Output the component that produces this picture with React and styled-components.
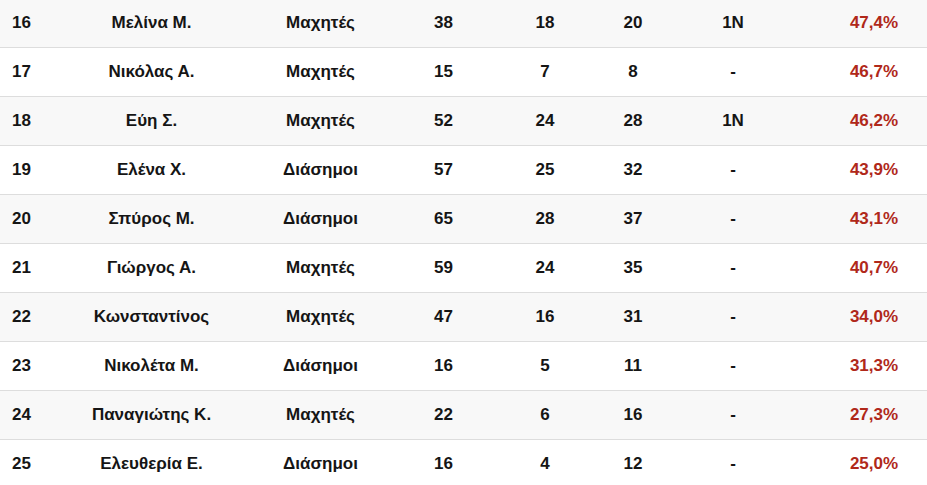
import styled, { createGlobalStyle } from "styled-components";

const GlobalStyle = createGlobalStyle`
  html, body {
    margin: 0;
    padding: 0;
    background: #ffffff;
  }
  body {
    font-family: "Liberation Sans", Arial, sans-serif;
    overflow: hidden;
  }
`;

const players = [
  ["16", "Μελίνα Μ.", "Μαχητές", 38, 18, 20, "1N", "47,4%"],
  ["17", "Νικόλας Α.", "Μαχητές", 15, 7, 8, "-", "46,7%"],
  ["18", "Εύη Σ.", "Μαχητές", 52, 24, 28, "1N", "46,2%"],
  ["19", "Ελένα Χ.", "Διάσημοι", 57, 25, 32, "-", "43,9%"],
  ["20", "Σπύρος Μ.", "Διάσημοι", 65, 28, 37, "-", "43,1%"],
  ["21", "Γιώργος Α.", "Μαχητές", 59, 24, 35, "-", "40,7%"],
  ["22", "Κωνσταντίνος", "Μαχητές", 47, 16, 31, "-", "34,0%"],
  ["23", "Νικολέτα Μ.", "Διάσημοι", 16, 5, 11, "-", "31,3%"],
  ["24", "Παναγιώτης Κ.", "Μαχητές", 22, 6, 16, "-", "27,3%"],
  ["25", "Ελευθερία Ε.", "Διάσημοι", 16, 4, 12, "-", "25,0%"],
];

export default function App() {
  return (
    <>
      <GlobalStyle />
      <Table>
        {players.map((p, i) => (
          <Row key={p[0]} $striped={i % 2 === 0}>
            <Rank>{p[0]}</Rank>
            <Cell>{p[1]}</Cell>
            <Cell>{p[2]}</Cell>
            <Cell>{p[3]}</Cell>
            <Cell>{p[4]}</Cell>
            <Cell>{p[5]}</Cell>
            <Cell>{p[6]}</Cell>
            <Percent>{p[7]}</Percent>
          </Row>
        ))}
      </Table>
    </>
  );
}

const Table = styled.div`
  width: 927px;
  margin-top: -1px;
  display: flex;
  flex-direction: column;
`;

const Row = styled.div`
  display: grid;
  grid-template-columns: 80px 143px 195px 51px 152px 24px 176px 1fr;
  align-items: center;
  height: 48px;
  border-bottom: 1px solid #dddddd;
  background-color: ${(p) => (p.$striped ? "#f8f8f8" : "#ffffff")};
  font-size: 17px;
  font-weight: bold;
  color: #151515;
`;

const Cell = styled.div`
  text-align: center;
  white-space: nowrap;
`;

const Rank = styled.div`
  padding-left: 12px;
`;

const Percent = styled(Cell)`
  color: #b0281a;
`;
